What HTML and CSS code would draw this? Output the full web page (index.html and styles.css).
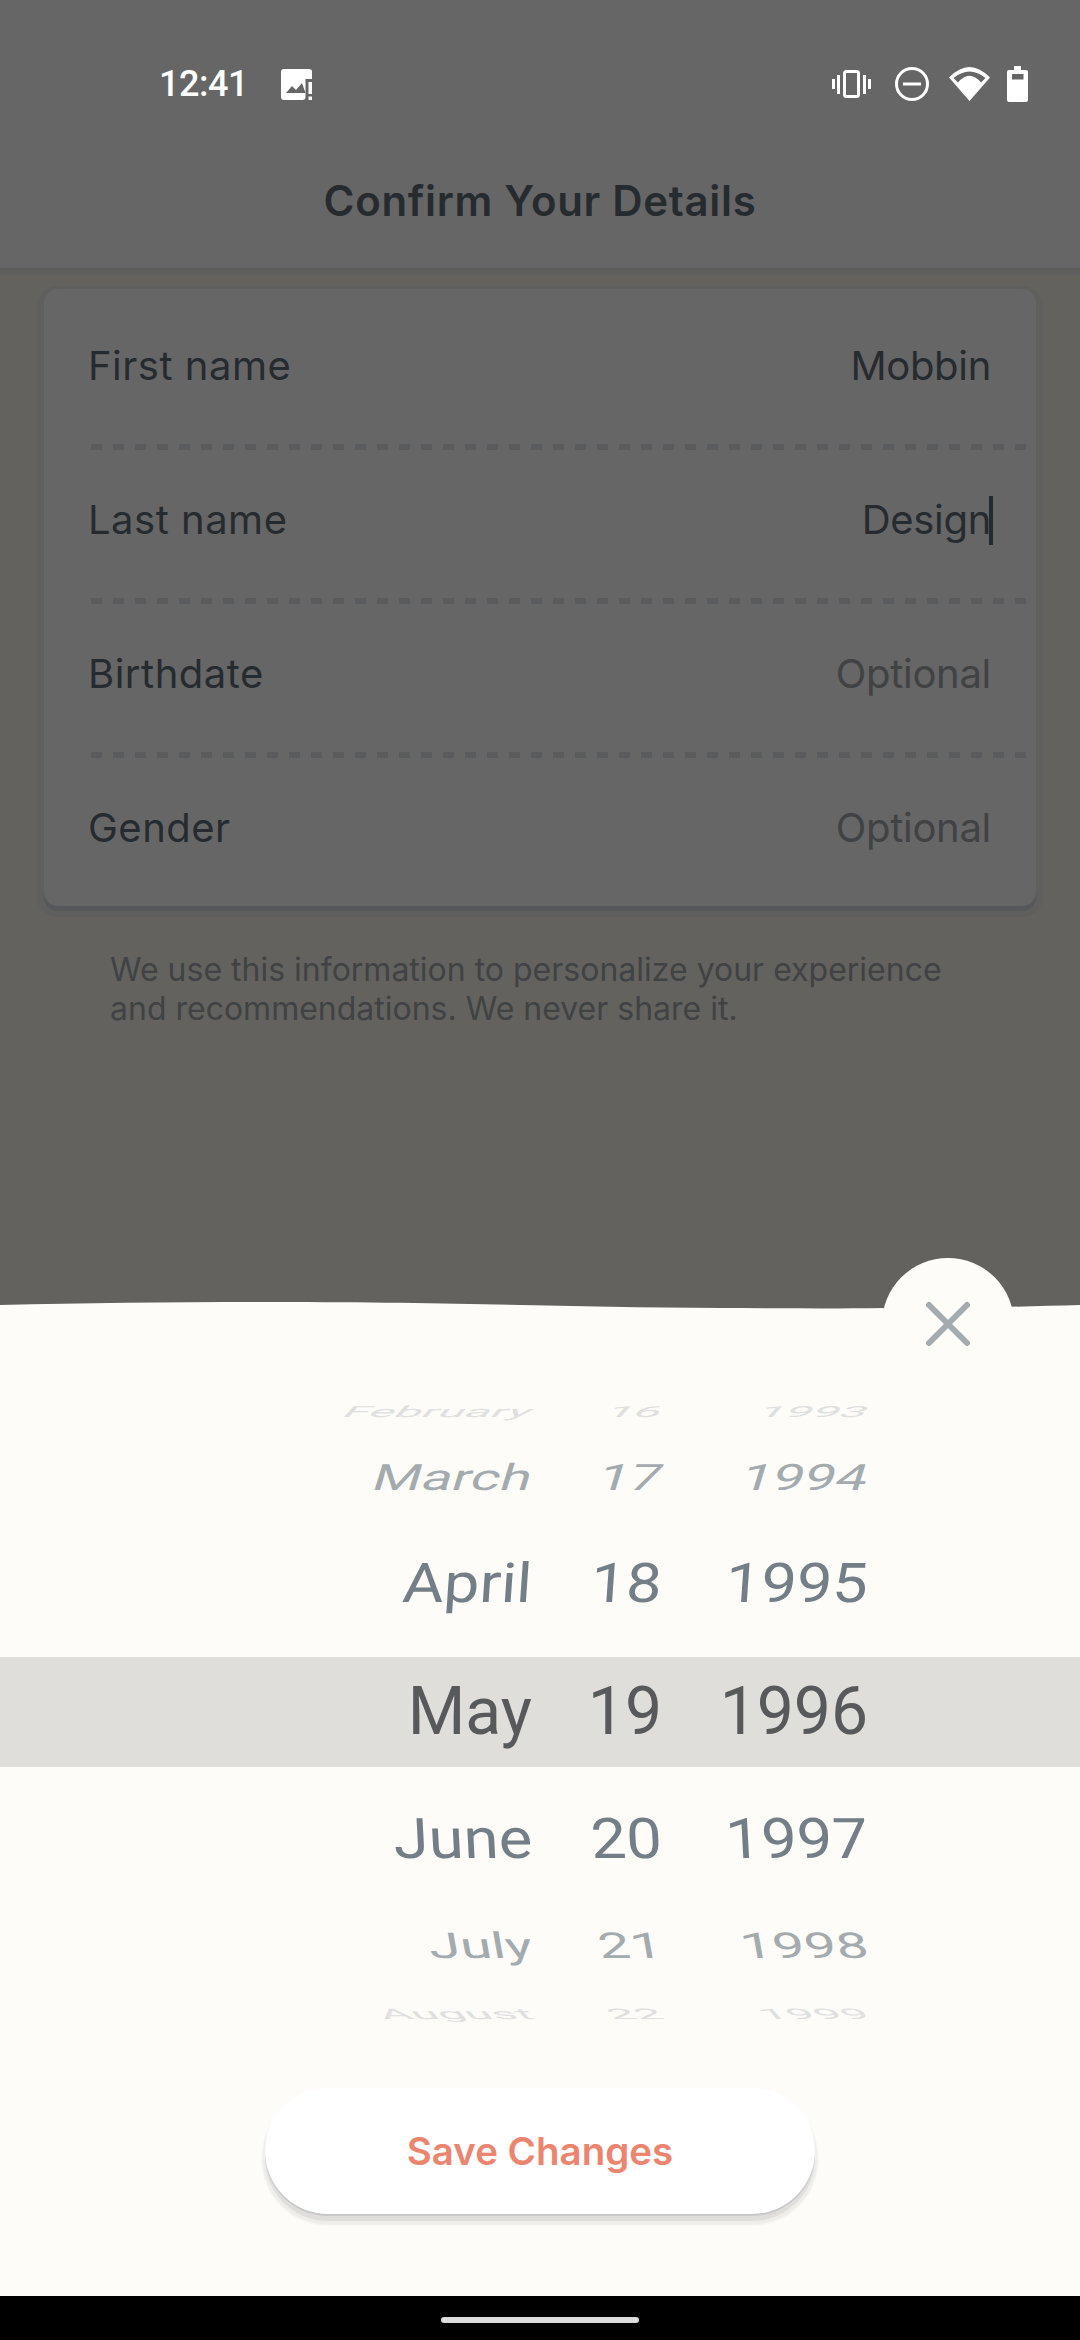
FILE: index.html
```html
<!DOCTYPE html>
<html lang="en">
<head>
    <meta charset="UTF-8">
    <meta name="viewport" content="width=device-width, initial-scale=1.0">
    <title>Confirm Your Details</title>
    <link rel="stylesheet" href="styles.css">
</head>
<body>
    <div class="screen">
        <header class="app-header">
            <div class="status-bar">
                <div class="status-left">
                    <span class="status-time">12:41</span>
                    <svg class="icon-picture" width="31" height="31" viewBox="0 0 31 31">
                        <path fill="#fff" d="M3 0H28a3 3 0 0 1 3 3V10H24.500V28a3 3 0 0 1-3 3H3a3 3 0 0 1-3-3V3a3 3 0 0 1 3-3Z"/>
                        <path fill="#666" d="M5 24L11 17L15 21L21 14L24.500 24Z"/>
                        <path fill="#fff" d="M27.500 13H31V25H27.500ZM27.500 27.500H31V31H27.500Z"/>
                    </svg>
                </div>
                <div class="status-right">
                    <svg class="icon-vibrate" width="39" height="28" viewBox="0 0 39 28">
                        <rect x="12.500" y="1.500" width="14" height="25" rx="2" fill="none" stroke="#fff" stroke-width="3"/>
                        <path fill="#fff" d="M0 9H3V19H0ZM5 5H8V24H5ZM31 5H34V24H31ZM36 9H39V19H36Z"/>
                    </svg>
                    <svg width="34" height="34" viewBox="0 0 34 34">
                        <circle cx="17" cy="17" r="15.500" fill="none" stroke="#fff" stroke-width="3"/>
                        <rect x="8" y="15.500" width="18" height="3" fill="#fff"/>
                    </svg>
                    <svg class="icon-wifi" width="41" height="34" viewBox="0 0 41 34">
                        <path fill="#fff" fill-rule="evenodd" d="M0 10.500Q20.500 -10.500 41 10.500L20.500 34ZM4.500 11Q20.500 -2 36.500 11L32 15.500Q20.500 2 9 15.500Z"/>
                    </svg>
                    <svg width="21" height="36" viewBox="0 0 21 36">
                        <path fill="#fff" fill-rule="evenodd" d="M7 0H14V4H19a2 2 0 0 1 2 2V34a2 2 0 0 1-2 2H2a2 2 0 0 1-2-2V6a2 2 0 0 1 2-2H7ZM5 8V13.500H16.500V8Z"/>
                    </svg>
                </div>
            </div>
            <h1 class="page-title">Confirm Your Details</h1>
        </header>

        <main class="details">
            <section class="details-card">
                <div class="detail-row">
                    <span class="detail-label">First name</span>
                    <span class="detail-value">Mobbin</span>
                </div>
                <div class="detail-row">
                    <span class="detail-label">Last name</span>
                    <span class="detail-value">Design<i class="caret"></i></span>
                </div>
                <div class="detail-row">
                    <span class="detail-label">Birthdate</span>
                    <span class="detail-value optional">Optional</span>
                </div>
                <div class="detail-row">
                    <span class="detail-label">Gender</span>
                    <span class="detail-value optional">Optional</span>
                </div>
            </section>
            <p class="details-note">We use this information to personalize your experience and recommendations. We never share it.</p>
        </main>

        <section class="sheet">
            <svg class="sheet-wave" width="1080" height="10" viewBox="0 0 1080 10" preserveAspectRatio="none">
                <path fill="#fdfcf8" d="M0 3C90 1 180 0 275 0C450 0 560 5 720 6C800 6.500 880 6.500 948 6C990 5.500 1040 4 1080 3V10H0Z"/>
            </svg>
            <div class="close-btn">
                <svg width="50" height="50" viewBox="0 0 50 50">
                    <path d="M6 6L44 44M44 6L6 44" stroke="#a3abaf" stroke-width="6" stroke-linecap="round" fill="none"/>
                </svg>
            </div>
            <div class="sheet-body">
                <div class="wheel">
                    <div class="wheel-row far-top"><span>February</span><span>16</span><span>1993</span></div>
                    <div class="wheel-row mid-top"><span>March</span><span>17</span><span>1994</span></div>
                    <div class="wheel-row near-top"><span>April</span><span>18</span><span>1995</span></div>
                    <div class="wheel-row selected"><span>May</span><span>19</span><span>1996</span></div>
                    <div class="wheel-row near-bottom"><span>June</span><span>20</span><span>1997</span></div>
                    <div class="wheel-row mid-bottom"><span>July</span><span>21</span><span>1998</span></div>
                    <div class="wheel-row far-bottom"><span>August</span><span>22</span><span>1999</span></div>
                </div>
                <button class="save-btn" type="button">Save Changes</button>
            </div>
        </section>

        <footer class="nav-bar">
            <div class="nav-handle"></div>
        </footer>
    </div>
</body>
</html>
```

FILE: styles.css
```css
:root {
    --dim-background: #63625f;
    --dim-surface: #666666;
    --dim-text: #262b30;
    --dim-muted: #404244;
    --sheet-color: #fdfcf8;
    --wheel-near: #737e87;
    --wheel-mid: #a3abaf;
    --wheel-far: #dfe0df;
}

* {
    margin: 0;
    padding: 0;
    box-sizing: border-box;
}

body {
    width: 1080px;
    height: 2340px;
    overflow: hidden;
    font-family: "Inter", "Noto Sans", sans-serif;
}

.screen {
    display: flex;
    flex-direction: column;
    height: 2340px;
    background-color: var(--dim-background);
}

.app-header {
    height: 270px;
    background-color: var(--dim-surface);
    border-bottom: 2px solid #5c5c5c;
    box-shadow: 0 5px 0 #5e5e5c;
}

.status-bar {
    display: flex;
    justify-content: space-between;
    align-items: center;
    height: 168px;
    padding: 0 52px 0 159px;
}

.status-left {
    display: flex;
    align-items: center;
    gap: 33px;
}

.status-time {
    font-family: "Roboto", sans-serif;
    font-size: 36px;
    font-weight: 500;
    letter-spacing: -0.5px;
    color: #fff;
}

.status-right {
    display: flex;
    align-items: center;
    gap: 20px;
}

.icon-vibrate {
    margin-right: 4px;
}

.icon-wifi {
    margin-right: -3px;
}

.page-title {
    height: 66px;
    line-height: 66px;
    text-align: center;
    font-size: 42px;
    font-weight: 600;
    letter-spacing: 0.7px;
    color: var(--dim-text);
}

.details {
    flex: 1;
    padding: 19px 44px 0;
}

.details-card {
    padding: 7px 9px 0 44px;
    background-color: var(--dim-surface);
    border-radius: 14px;
    box-shadow: 0 5px 0 #56575a, 0 4px 0 7px #5f5f5e;
}

.detail-row {
    display: flex;
    justify-content: space-between;
    height: 154px;
    padding: 47px 36px 0 0;
    font-size: 40px;
    line-height: 46px;
    color: var(--dim-text);
    background-image: repeating-linear-gradient(90deg, #5a5b5d 0 11px, transparent 11px 22px);
    background-repeat: no-repeat;
    background-size: calc(100% - 3px) 6px;
    background-position: 3px 148px;
}

.detail-row:last-child {
    height: 148px;
    background-image: none;
}

.detail-label {
    letter-spacing: 0.5px;
}

.detail-value {
    position: relative;
    letter-spacing: -0.3px;
}

.detail-value.optional {
    color: var(--dim-muted);
}

.caret {
    position: absolute;
    right: -2px;
    top: -1px;
    width: 4px;
    height: 49px;
    background-color: var(--dim-text);
}

.details-note {
    margin-top: 44px;
    padding: 0 46px 0 66px;
    font-size: 32px;
    line-height: 39px;
    color: var(--dim-muted);
}

.sheet {
    position: relative;
    display: flex;
    flex-direction: column;
}

.sheet-wave {
    display: block;
    margin-bottom: -2px;
}

.close-btn {
    position: absolute;
    left: 882px;
    top: -44px;
    display: flex;
    justify-content: center;
    align-items: center;
    width: 132px;
    height: 132px;
    border-radius: 50%;
    background-color: var(--sheet-color);
}

.sheet-body {
    display: flex;
    flex-direction: column;
    align-items: center;
    height: 986px;
    padding-top: 69px;
    background-color: var(--sheet-color);
}

.wheel {
    width: 100%;
}

.wheel-row {
    display: grid;
    grid-template-columns: 532px 130px 206px;
    align-items: center;
    font-family: "Roboto", sans-serif;
    font-size: 66px;
    line-height: 1;
    white-space: nowrap;
}

.wheel-row span {
    display: block;
    text-align: right;
    transform-origin: 100% 50%;
}

.far-top {
    height: 66px;
    color: var(--wheel-far);
}

.far-top span {
    transform: skewX(-41deg) scale(0.73, 0.23);
}

.mid-top {
    height: 66px;
    color: var(--wheel-mid);
}

.mid-top span {
    transform: skewX(-17deg) scale(0.85, 0.55);
}

.near-top {
    height: 146px;
    color: var(--wheel-near);
}

.near-top span {
    transform: skewX(-4deg) scale(0.96, 0.83);
}

.selected {
    height: 110px;
    color: #58595b;
    background-color: #dfdedb;
}

.near-bottom {
    height: 144px;
    color: var(--wheel-near);
}

.near-bottom span {
    transform: skewX(3deg) scale(0.96, 0.85);
}

.mid-bottom {
    height: 70px;
    color: var(--wheel-mid);
}

.mid-bottom span {
    transform: skewX(10deg) scale(0.86, 0.54);
}

.far-bottom {
    height: 60px;
    color: var(--wheel-far);
}

.far-bottom span {
    transform: skewX(40deg) scale(0.73, 0.22);
}

.save-btn {
    width: 550px;
    height: 126px;
    margin-top: 47px;
    border: none;
    border-radius: 63px;
    background-color: #fff;
    box-shadow: 0 2px 0 #c8c8c6, 0 7px 0 #dfdedb, 0 8px 2px 3px #eeedea;
    font-family: "Inter", sans-serif;
    font-size: 38.500px;
    font-weight: 600;
    color: #ec8570;
}

.nav-bar {
    height: 44px;
    display: flex;
    justify-content: center;
    padding-top: 21px;
    background-color: #000;
}

.nav-handle {
    width: 198px;
    height: 6px;
    border-radius: 3px;
    background-color: #dcdcdc;
}
```
